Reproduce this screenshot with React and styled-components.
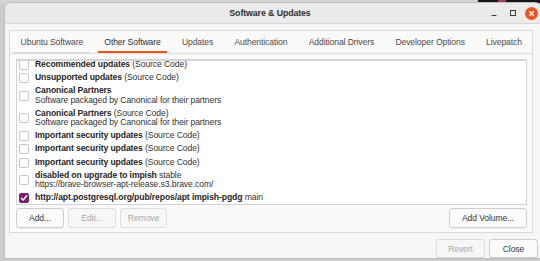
import styled, { createGlobalStyle } from 'styled-components';

const GlobalStyle = createGlobalStyle`
  html, body {
    margin: 0;
    padding: 0;
    background: #cbcbcb;
  }
  body {
    font-family: "Liberation Sans", Arial, sans-serif;
    font-size: 8.6px;
    letter-spacing: -0.1px;
    color: #3c3c3c;
  }
`;

const Screen = styled.div`
  width: 540px;
  height: 261px;
  overflow: hidden;
  background: #cccccc;
  display: flex;
  flex-direction: column;
`;

const DesktopBar = styled.div`
  flex: none;
  height: 3px;
  background: linear-gradient(to right, #d3d3d3 0 478px, #161616 478px 498px, #a03a6a 498px 506px, #161616 506px);
`;

const WindowRow = styled.div`
  display: flex;
  padding-left: 5px;
`;

const Window = styled.div`
  flex: none;
  width: 536px;
  height: 255px;
  background: #f6f6f6;
  border-radius: 6px 6px 0 0;
  box-shadow: 0 0 0 1px #bdbdbd;
  display: flex;
  flex-direction: column;
  overflow: hidden;
`;

const TitleBar = styled.div`
  flex: none;
  height: 20px;
  border-bottom: 1px solid #d6d6d6;
  background: #ebebeb;
  display: grid;
  grid-template-columns: 1fr auto 1fr;
  align-items: center;
`;

const Title = styled.div`
  grid-column: 2;
  font-weight: 700;
  font-size: 8.8px;
  color: #2e2e2e;
  padding-right: 6px;
`;

const Controls = styled.div`
  grid-column: 3;
  justify-self: end;
  display: flex;
  align-items: center;
  gap: 6px;
  padding-right: 3px;
`;

const CtlButton = styled.div`
  width: 13px;
  height: 13px;
  display: flex;
  align-items: center;
  justify-content: center;
  border-radius: 50%;
  background: ${(p) => (p.$close ? '#e95420' : 'transparent')};
`;

const Notebook = styled.div`
  margin: 6px 8px 0 4px;
  border: 1px solid #d9d9d9;
  background: #fafafa;
  display: flex;
  flex-direction: column;
`;

const TabBar = styled.div`
  height: 22px;
  border-bottom: 1px solid #dcdcdc;
  display: flex;
  background: #fafafa;
`;

const Tab = styled.div`
  position: relative;
  padding: 0 10.6px;
  display: flex;
  align-items: center;
  color: ${(p) => (p.$active ? '#2f2f2f' : '#4a4a4a')};
  white-space: nowrap;

  &:after {
    content: '';
    position: absolute;
    left: 4px;
    right: 4px;
    bottom: 0;
    height: ${(p) => (p.$active ? '2px' : '1px')};
    background: ${(p) => (p.$active ? '#e95420' : p.$hover ? '#d4d4d4' : 'transparent')};
  }
`;

const Page = styled.div`
  padding: 5px 5px 4px 6px;
  display: flex;
  flex-direction: column;
  gap: 3px;
`;

const SourceList = styled.div`
  height: 143px;
  border: 1px solid #d2d2d2;
  border-top: 2px solid #d4d4d4;
  background: #ffffff;
  overflow: hidden;
`;

const ListInner = styled.div`
  margin-top: -3px;
`;

const Row = styled.div`
  display: flex;
  align-items: center;
  gap: 6px;
  padding: 1.7px 0 1.7px 2px;
  line-height: 9.4px;
`;

const Box = styled.div`
  flex: none;
  box-sizing: border-box;
  width: 10px;
  height: 10px;
  border-radius: 2px;
  border: 1px solid ${(p) => (p.$checked ? '#77216f' : '#c6c6c6')};
  background: ${(p) => (p.$checked ? '#77216f' : '#ffffff')};
  display: flex;
  align-items: center;
  justify-content: center;
`;

const RowText = styled.div`
  display: flex;
  flex-direction: column;
  white-space: nowrap;
  color: #333333;
`;

const Strong = styled.span`
  font-weight: 700;
  color: #262626;
`;

const ButtonRow = styled.div`
  display: flex;
  gap: 4px;
`;

const Spacer = styled.div`
  flex: 1;
`;

const Button = styled.button`
  width: ${(p) => p.$w}px;
  height: ${(p) => p.$h || 20}px;
  padding: 0;
  border: 1px solid ${(p) => (p.disabled ? '#dcdcdc' : '#cdcdcd')};
  border-radius: 3px;
  background: ${(p) => (p.disabled ? '#f7f7f7' : '#fbfbfb')};
  font-family: "Liberation Sans", Arial, sans-serif;
  font-size: 8.6px;
  letter-spacing: -0.1px;
  color: ${(p) => (p.disabled ? '#a9a9a9' : '#3a3a3a')};
  box-shadow: ${(p) => (p.disabled ? 'none' : '0 1px 0 rgba(0,0,0,0.04)')};
`;

const Footer = styled.div`
  display: flex;
  justify-content: flex-end;
  gap: 4px;
  padding: 6px 3px 0 0;
`;

const Check = () => (
  <svg width="8" height="8" viewBox="0 0 8 8">
    <path d="M1.3 4.2 L3.2 6 L6.8 1.8" fill="none" stroke="#fff" strokeWidth="1.4" strokeLinecap="round" strokeLinejoin="round" />
  </svg>
);

const sources = [
  { name: 'Recommended updates', extra: '(Source Code)' },
  { name: 'Unsupported updates', extra: '(Source Code)' },
  { name: 'Canonical Partners', sub: 'Software packaged by Canonical for their partners' },
  { name: 'Canonical Partners', extra: '(Source Code)', sub: 'Software packaged by Canonical for their partners' },
  { name: 'Important security updates', extra: '(Source Code)' },
  { name: 'Important security updates', extra: '(Source Code)' },
  { name: 'Important security updates', extra: '(Source Code)' },
  { name: 'disabled on upgrade to impish', extra: 'stable', sub: 'https://brave-browser-apt-release.s3.brave.com/' },
  { name: 'http://apt.postgresql.org/pub/repos/apt impish-pgdg', extra: 'main', checked: true },
];

const tabs = ['Ubuntu Software', 'Other Software', 'Updates', 'Authentication', 'Additional Drivers', 'Developer Options', 'Livepatch'];

export default function App() {
  return (
    <Screen>
      <GlobalStyle />
      <DesktopBar />
      <WindowRow>
        <Window>
          <TitleBar>
            <Title>Software &amp; Updates</Title>
            <Controls>
              <CtlButton>
                <svg width="8" height="8" viewBox="0 0 8 8">
                  <path d="M1.5 6.5 H6.5" stroke="#3a3a3a" strokeWidth="1" />
                </svg>
              </CtlButton>
              <CtlButton>
                <svg width="8" height="8" viewBox="0 0 8 8">
                  <rect x="1.5" y="1.5" width="5" height="5" fill="none" stroke="#3a3a3a" strokeWidth="1" />
                </svg>
              </CtlButton>
              <CtlButton $close>
                <svg width="7" height="7" viewBox="0 0 7 7">
                  <path d="M1.5 1.5 L5.5 5.5 M5.5 1.5 L1.5 5.5" stroke="#fff" strokeWidth="1.2" strokeLinecap="round" />
                </svg>
              </CtlButton>
            </Controls>
          </TitleBar>

          <Notebook>
            <TabBar>
              {tabs.map((t, i) => (
                <Tab key={t} $active={i === 1} $hover={i === 0}>{t}</Tab>
              ))}
            </TabBar>
            <Page>
              <SourceList>
                <ListInner>
                  {sources.map((s, i) => (
                    <Row key={i}>
                      <Box $checked={s.checked}>{s.checked && <Check />}</Box>
                      <RowText>
                        <span>
                          <Strong>{s.name}</Strong>
                          {s.extra && ' ' + s.extra}
                        </span>
                        {s.sub && <span>{s.sub}</span>}
                      </RowText>
                    </Row>
                  ))}
                </ListInner>
              </SourceList>
              <ButtonRow>
                <Button $w={48}>Add...</Button>
                <Button $w={48} disabled>Edit...</Button>
                <Button $w={47} disabled>Remove</Button>
                <Spacer />
                <Button $w={78}>Add Volume...</Button>
              </ButtonRow>
            </Page>
          </Notebook>

          <Footer>
            <Button $w={49} $h={19} disabled>Revert</Button>
            <Button $w={49} $h={19}>Close</Button>
          </Footer>
        </Window>
      </WindowRow>
    </Screen>
  );
}
